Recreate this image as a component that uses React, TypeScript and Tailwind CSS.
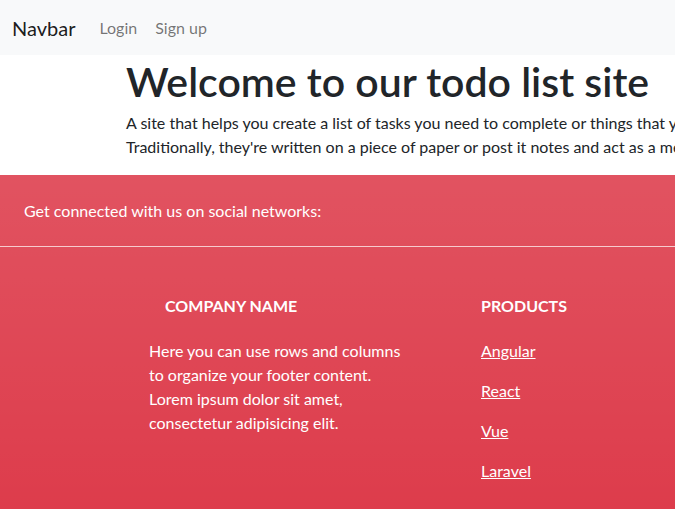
import React from "react";

export default function App() {
  return (
    <div className="w-[675px] h-[509px] overflow-hidden bg-white font-['Lato',sans-serif]">
      <nav className="h-[55px] bg-[#f8f9fa] flex items-center px-3">
        <span className="text-[20px] text-black/90 mr-4 leading-[30px]">Navbar</span>
        <a className="text-[16px] text-black/55 px-2">Login</a>
        <a className="text-[16px] text-black/55 pl-[10px] pr-2">Sign up</a>
      </nav>
      <section className="pl-[126px] h-[120px] whitespace-nowrap">
        <h1 className="text-[41px] font-semibold leading-[50px] text-[#212529] pt-[2px]">Welcome to our todo list site</h1>
        <p className="text-[16px] leading-6 text-[#212529] mt-[4px]">
          A site that helps you create a list of tasks you need to complete or things that you want to do.
          <br />
          Traditionally, they're written on a piece of paper or post it notes and act as a memory aid.
        </p>
      </section>
      <footer className="bg-[#dc3545] bg-[linear-gradient(180deg,rgba(255,255,255,0.15),rgba(255,255,255,0)_435px)] text-white h-[435px]">
        <div className="h-[72px] flex items-center px-6 border-b border-white/70">
          <span className="text-[16px] leading-6">Get connected with us on social networks:</span>
        </div>
        <div className="flex pt-[49px]">
          <div className="pl-[149px] w-[481px]">
            <h6 className="text-[16px] font-bold uppercase leading-[19px] pl-4 mb-[24px]">Company name</h6>
            <p className="text-[16px] leading-6">
              Here you can use rows and columns
              <br />
              to organize your footer content.
              <br />
              Lorem ipsum dolor sit amet,
              <br />
              consectetur adipisicing elit.
            </p>
          </div>
          <div>
            <h6 className="text-[16px] font-bold uppercase leading-[19px] mb-[24px]">Products</h6>
            {["Angular", "React", "Vue", "Laravel"].map((l) => (
              <p key={l} className="text-[16px] leading-6 mb-4">
                <a className="underline">{l}</a>
              </p>
            ))}
          </div>
        </div>
      </footer>
    </div>
  );
}
